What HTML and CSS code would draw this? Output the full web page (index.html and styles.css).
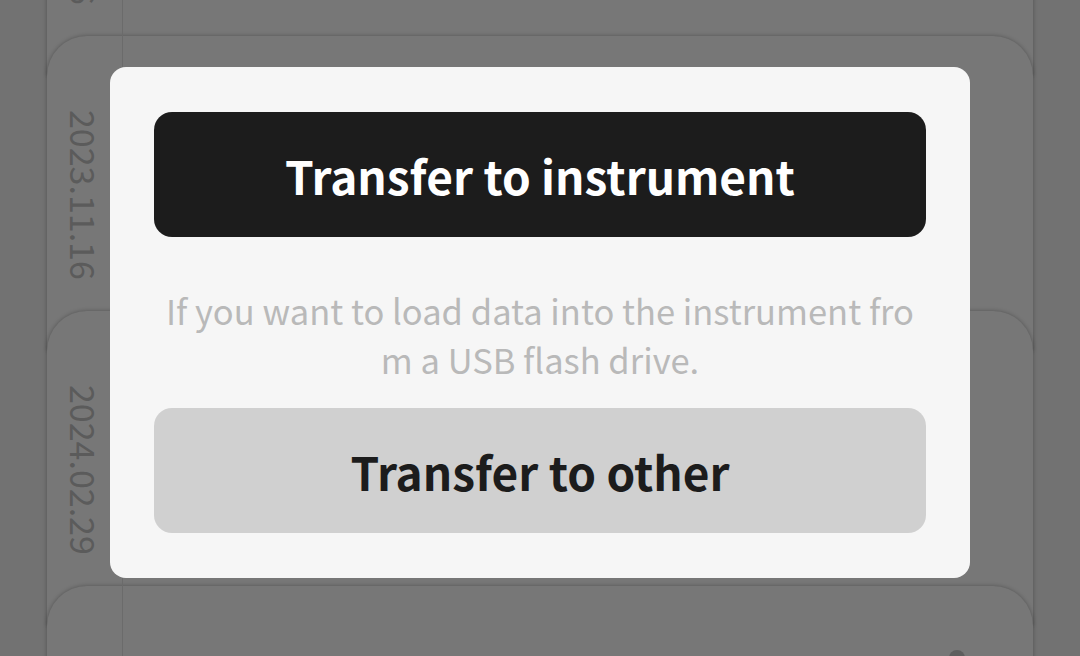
FILE: index.html
```html
<!DOCTYPE html>
<html>
<head>
	<meta charset="UTF-8">
	<title>Transfer</title>
	<link rel="stylesheet" href="styles.css">
</head>
<body>
	<div class="screen">
	    <div class="list">
	        <div class="card">
	            <div class="date">2023.10.26</div>
	            <div class="body"></div>
	        </div>
	        <div class="card">
	            <div class="date">2023.11.16</div>
	            <div class="body"></div>
	        </div>
	        <div class="card">
	            <div class="date">2024.02.29</div>
	            <div class="body"></div>
	        </div>
	        <div class="card">
	            <div class="date"></div>
	            <div class="body"><i class="dot"></i></div>
	        </div>
	    </div>
	    <div class="dialog">
	        <button class="btn btn-dark">Transfer to instrument</button>
	        <p class="hint">If you want to load data into the instrument from a USB flash drive.</p>
	        <button class="btn btn-light">Transfer to other</button>
	    </div>
	</div>
</body>
</html>
```

FILE: styles.css
```css
html, body {
    margin: 0;
    padding: 0;
}
body {
    font-family: "Noto Sans CJK JP", "Noto Sans", sans-serif;
}
.screen {
    position: relative;
    height: 656px;
    overflow: hidden;
    background: #727272;
}
.list {
    margin: -239px 47px 0;
    display: flex;
    flex-direction: column;
}
.card {
    height: 315px;
    margin-bottom: -40px;
    display: flex;
    background: #777;
    border-radius: 40px 40px 0 0;
    box-shadow: 0 0 4px rgba(0, 0, 0, .3);
}
.date {
    width: 75px;
    padding-top: 74px;
    writing-mode: vertical-rl;
    font-size: 34px;
    line-height: 75px;
    color: #5b5b5b;
}
.body {
    flex: 1;
    position: relative;
    border-left: 1px solid #6b6b6b;
}
.dot {
    position: absolute;
    left: 826px;
    top: 64px;
    width: 16px; height: 16px;
    border-radius: 50%;
    background: #5e5e5e;
}
.dialog {
    position: absolute;
    left: 110px;
    top: 67px;
    width: 860px;
    height: 511px;
    box-sizing: border-box;
    padding: 45px 44px;
    background: #f6f6f6;
    border-radius: 16px;
    display: flex;
    flex-direction: column;
}
.btn {
    height: 125px;
    border: 0;
    border-radius: 18px;
    font-family: inherit;
    font-size: 46px;
    font-weight: 700;
    padding: 0;
}
.btn-dark {
    background: #1c1c1c;
    color: #fff;
}
.btn-light {
    background: #d0d0d0;
    color: #1c1c1c;
}
.hint {
    flex: 1;
    margin: 0;
    padding-top: 49px;
    font-size: 34.5px;
    line-height: 49px;
    color: #b9b9b9;
    text-align: center;
    word-break: break-all;
}
```
